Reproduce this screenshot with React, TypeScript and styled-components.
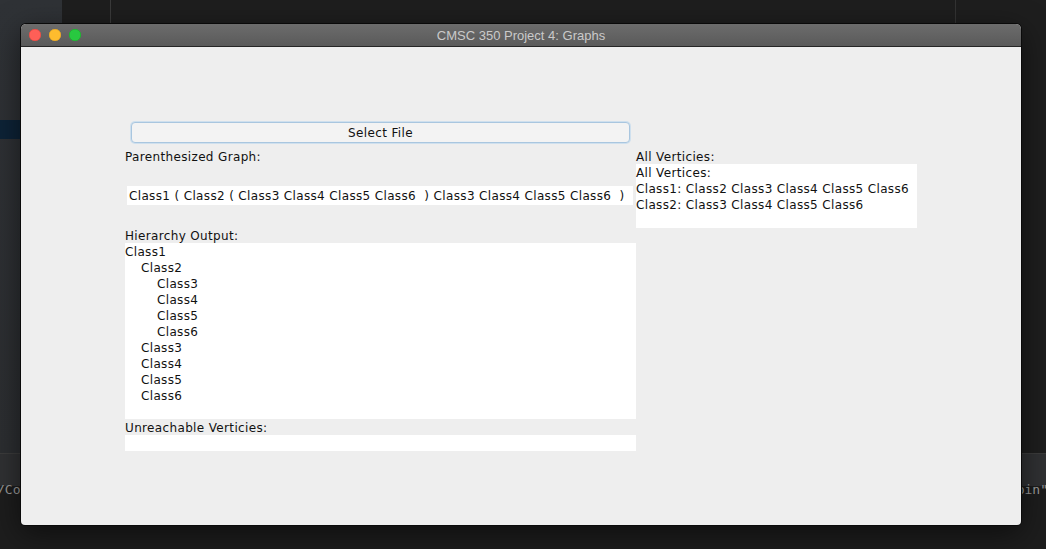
import { FC } from 'react';
import styled, { createGlobalStyle } from 'styled-components';

const GlobalStyle = createGlobalStyle`
  html, body {
    margin: 0;
    padding: 0;
    background: #1e1e1e;
    overflow: hidden;
  }
`;

const Desktop = styled.div`
  position: relative;
  width: 1046px;
  height: 549px;
  display: flex;
  flex-direction: column;
  background: #1d1d1d;
  overflow: hidden;
`;

const Workspace = styled.div`
  display: flex;
  height: 453px;
`;

const Sidebar = styled.div`
  width: 62px;
  background: linear-gradient(180deg, #2f3236 0%, #2c2e31 100%);
  padding-top: 120px;
  box-sizing: border-box;
`;

const SidebarSelection = styled.div`
  height: 19px;
  width: 20px;
  background: #0d2337;
`;

const Gutter = styled.div`
  width: 48px;
  background: #1e1e1e;
  border-right: 1px solid #3a3a3a;
`;

const Editor = styled.div`
  flex: 1;
  display: flex;
  justify-content: flex-end;
  background: #1e1e1e;
`;

const EditorSplit = styled.div`
  width: 90px;
  border-left: 1px solid #333;
  background: #1e1e1e;
`;

const PanelBar = styled.div`
  height: 32px;
  background: #303133;
  border-top: 1px solid #3c3c3c;
`;

const Terminal = styled.div`
  display: flex;
  justify-content: space-between;
  margin: -5px -2px 0 -3px;
  font-family: 'DejaVu Sans Mono', monospace;
  font-size: 13px;
  color: #9a9a9a;
  line-height: 18px;
`;

const Window = styled.div`
  position: absolute;
  left: 21px;
  top: 24px;
  width: 1000px;
  height: 501px;
  display: flex;
  flex-direction: column;
  border-radius: 5px 5px 4px 4px;
  overflow: hidden;
  background: #eeeeee;
  box-shadow: 0 0 0 1px #0a0a0a, 0 8px 30px rgba(0, 0, 0, 0.55);
`;

const TitleBar = styled.div`
  position: relative;
  height: 22px;
  display: flex;
  align-items: center;
  justify-content: center;
  background: linear-gradient(180deg, #6c6c6c 0%, #5a5a5a 100%);
  border-bottom: 1px solid #262626;
  font-family: 'Liberation Sans', Arial, sans-serif;
  font-size: 13px;
  color: #cacaca;
`;

const Lights = styled.div`
  position: absolute;
  left: 8px;
  top: 5px;
  display: flex;
  gap: 8px;
`;

const Light = styled.span<{ $color: string; $edge: string }>`
  width: 12px;
  height: 12px;
  border-radius: 50%;
  background: ${(p) => p.$color};
  box-shadow: inset 0 0 0 0.5px ${(p) => p.$edge};
`;

const Body = styled.div`
  flex: 1;
  display: grid;
  grid-template-columns: 511px 281px;
  grid-template-rows: 21px auto;
  row-gap: 5px;
  align-content: start;
  padding: 75px 0 0 104px;
  font-family: 'DejaVu Sans', 'Liberation Sans', sans-serif;
  font-size: 12px;
  letter-spacing: 0.35px;
  color: #111;
`;

const SelectButton = styled.button`
  grid-column: 1;
  margin-left: 6px;
  width: 499px;
  height: 21px;
  padding: 0;
  border: 1px solid #a9c6df;
  border-radius: 4px;
  background: #f3f3f3;
  box-shadow: 0 0 0 1px #cfe0ee;
  font-family: inherit;
  font-size: 12px;
  letter-spacing: 0.35px;
  color: #111;
`;

const Column = styled.div`
  display: flex;
  flex-direction: column;
`;

const Label = styled.div<{ $gap?: number }>`
  height: 16px;
  line-height: 18px;
  margin-bottom: ${(p) => p.$gap ?? 0}px;
  white-space: pre;
`;

const TextField = styled.div`
  margin-left: 2px;
  width: 506px;
  height: 19px;
  line-height: 21px;
  padding-left: 2px;
  box-sizing: border-box;
  background: #ffffff;
  white-space: pre;
  margin-bottom: 22px;
`;

const TextArea = styled.div<{ $height: number }>`
  height: ${(p) => p.$height}px;
  background: #ffffff;
`;

const Line = styled.div<{ $level: number }>`
  height: 16px;
  line-height: 18px;
  padding-left: ${(p) => p.$level * 16}px;
  white-space: pre;
`;

type Node = { name: string; level: number };

const hierarchy: Node[] = [
  { name: 'Class1', level: 0 },
  { name: 'Class2', level: 1 },
  { name: 'Class3', level: 2 },
  { name: 'Class4', level: 2 },
  { name: 'Class5', level: 2 },
  { name: 'Class6', level: 2 },
  { name: 'Class3', level: 1 },
  { name: 'Class4', level: 1 },
  { name: 'Class5', level: 1 },
  { name: 'Class6', level: 1 },
];

const vertices = [
  'All Vertices:',
  'Class1: Class2 Class3 Class4 Class5 Class6',
  'Class2: Class3 Class4 Class5 Class6',
];

const App: FC = () => {
  return (
    <>
      <GlobalStyle />
      <Desktop>
        <Workspace>
          <Sidebar>
            <SidebarSelection />
          </Sidebar>
          <Gutter />
          <Editor>
            <EditorSplit />
          </Editor>
        </Workspace>
        <PanelBar />
        <Terminal>
          <span>/Co</span>
          <span>pin"</span>
        </Terminal>

        <Window>
          <TitleBar>
            <Lights>
              <Light $color="#fe5f57" $edge="#e0443e" />
              <Light $color="#febc2e" $edge="#dea123" />
              <Light $color="#28c840" $edge="#1aab29" />
            </Lights>
            CMSC 350 Project 4: Graphs
          </TitleBar>
          <Body>
            <SelectButton>Select File</SelectButton>
            <div />
            <Column>
              <Label $gap={22}>Parenthesized Graph:</Label>
              <TextField>Class1 ( Class2 ( Class3 Class4 Class5 Class6  ) Class3 Class4 Class5 Class6  )</TextField>
              <Label>Hierarchy Output:</Label>
              <TextArea $height={176}>
                {hierarchy.map((node, i) => (
                  <Line key={i} $level={node.level}>
                    {node.name}
                  </Line>
                ))}
              </TextArea>
              <Label>Unreachable Verticies:</Label>
              <TextArea $height={16} />
            </Column>
            <Column>
              <Label>All Verticies:</Label>
              <TextArea $height={64}>
                {vertices.map((v, i) => (
                  <Line key={i} $level={0}>
                    {v}
                  </Line>
                ))}
              </TextArea>
            </Column>
          </Body>
        </Window>
      </Desktop>
    </>
  );
};

export default App;
